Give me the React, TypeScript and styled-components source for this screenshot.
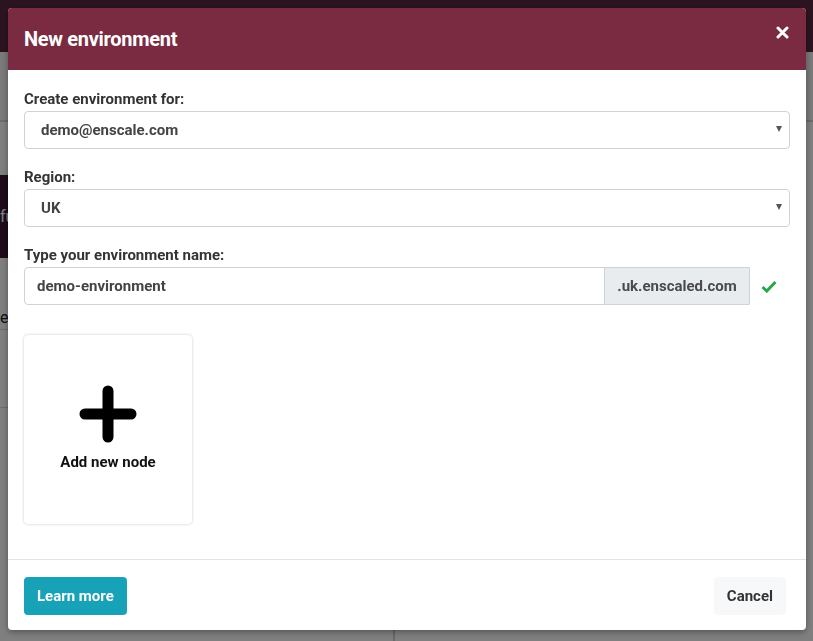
import React from "react";
import styled, { createGlobalStyle } from "styled-components";

const Global = createGlobalStyle`
  html, body { margin: 0; padding: 0; }
  body {
    width: 813px; height: 641px; overflow: hidden;
    font-family: "Roboto", "Liberation Sans", sans-serif;
    background: #fff;
  }
`;

const Page = styled.div`
  width: 813px;
  height: 641px;
  display: flex;
  flex-direction: column;
  background: #fefefe;
`;
const NavBar = styled.div`
  height: 52px;
  background: #57293f;
  flex-shrink: 0;
`;
const SubBar = styled.div`
  height: 68px;
  background: #f4f4f4;
  border-bottom: 2px solid #d6d6d6;
  flex-shrink: 0;
`;
const Content = styled.div`
  display: flex;
  flex-direction: column;
  padding-top: 53px;
  flex: 1;
`;
const HeroBlock = styled.div`
  height: 83px;
  width: 400px;
  background: #3c1530;
  color: #fff;
  font-size: 16px;
  display: flex;
  align-items: center;
`;
const Row = styled.div<{ $h: number }>`
  height: ${(p) => p.$h}px;
  width: 400px;
  border-bottom: 1px solid #d8d8d8;
  display: flex;
  align-items: flex-end;
  padding-bottom: 2px;
  box-sizing: border-box;
  font-size: 16px;
  color: #222;
`;
const BottomSplit = styled.div`
  flex: 1;
  display: flex;
`;
const SplitCol = styled.div`
  width: 393px;
  border-right: 2px solid #d0d0d0;
`;

const Overlay = styled.div`
  position: fixed;
  inset: 0;
  background: rgba(0, 0, 0, 0.5);
  padding: 8px;
  box-sizing: border-box;
`;

const Modal = styled.div`
  width: 798px;
  height: 622px;
  background: #fff;
  border-radius: 4px;
  overflow: hidden;
  display: flex;
  flex-direction: column;
  box-shadow: 0 2px 6px rgba(0, 0, 0, 0.35);
`;

const Header = styled.div`
  height: 62px;
  background: #7a2b42;
  display: flex;
  align-items: center;
  justify-content: space-between;
  padding: 0 16px;
  box-sizing: border-box;
  flex-shrink: 0;
`;
const Title = styled.h1`
  margin: 0;
  color: #fff;
  font-size: 20px;
  font-weight: 700;
  letter-spacing: -0.3px;
`;
const Close = styled.button`
  border: 0;
  background: none;
  padding: 0;
  width: 14px;
  height: 14px;
  margin-top: -14px;
  margin-right: 1px;
  display: flex;
  align-items: center;
  justify-content: center;
`;

const Body = styled.div`
  flex: 1;
  padding: 20px 16px 0 16px;
  display: flex;
  flex-direction: column;
  border-bottom: 1px solid #e3e3e3;
`;
const Field = styled.div`
  display: flex;
  flex-direction: column;
  margin-bottom: 19px;
`;
const Label = styled.label`
  font-size: 15px;
  font-weight: 700;
  color: #343434;
  margin-bottom: 3px;
  line-height: 18px;
`;
const Select = styled.div`
  height: 38px;
  border: 1px solid #cfd3d7;
  border-radius: 4px;
  box-sizing: border-box;
  display: flex;
  align-items: center;
  justify-content: space-between;
  padding: 0 7px 0 16px;
  font-size: 15px;
  font-weight: 700;
  color: #444;
`;
const Caret = styled.span`
  width: 0;
  height: 0;
  border-left: 3px solid transparent;
  border-right: 3px solid transparent;
  border-top: 6px solid #555;
  margin-top: -2px;
`;
const InputRow = styled.div`
  display: flex;
  align-items: center;
`;
const InputGroup = styled.div`
  display: flex;
  width: 726px;
  height: 38px;
  border: 1px solid #cfd3d7;
  border-radius: 4px 0 0 4px;
  box-sizing: border-box;
`;
const TextInput = styled.div`
  flex: 1;
  display: flex;
  align-items: center;
  padding-left: 12px;
  font-size: 15px;
  font-weight: 700;
  color: #444;
`;
const Addon = styled.div`
  width: 144px;
  background: #e9ecef;
  border-left: 1px solid #cfd3d7;
  display: flex;
  align-items: center;
  justify-content: center;
  font-size: 15px;
  font-weight: 700;
  color: #4a4a4a;
`;
const Check = styled.span`
  margin-left: 11px;
  display: flex;
`;

const Card = styled.div`
  margin-top: 11px;
  width: 168px;
  height: 189px;
  border-radius: 4px;
  box-shadow: 0 0 3px rgba(0, 0, 0, 0.22);
  display: flex;
  flex-direction: column;
  align-items: center;
  padding-top: 50px;
  box-sizing: border-box;
`;
const CardLabel = styled.div`
  margin-top: 10px;
  font-size: 15px;
  font-weight: 700;
  color: #111;
`;

const Footer = styled.div`
  height: 70px;
  display: flex;
  align-items: center;
  justify-content: space-between;
  padding: 0 20px 0 16px;
  flex-shrink: 0;
`;
const Button = styled.button<{ $primary?: boolean }>`
  height: 38px;
  border: 0;
  border-radius: 4px;
  padding: 0 13px;
  font-family: inherit;
  font-size: 15px;
  font-weight: 700;
  background: ${(p) => (p.$primary ? "#18a2b8" : "#f7f8f9")};
  color: ${(p) => (p.$primary ? "#fff" : "#333")};
  margin-top: 2px;
`;

export default function App() {
  return (
    <>
      <Global />
      <Page>
        <NavBar />
        <SubBar />
        <Content>
          <HeroBlock>fu</HeroBlock>
          <Row $h={72}>e</Row>
          <Row $h={78} />
          <BottomSplit>
            <SplitCol />
          </BottomSplit>
        </Content>
      </Page>
      <Overlay>
        <Modal>
          <Header>
            <Title>New environment</Title>
            <Close aria-label="Close">
              <svg width="13" height="13" viewBox="0 0 13 13">
                <path d="M2 2 L11 11 M11 2 L2 11" stroke="#fff" strokeWidth="3" strokeLinecap="round" />
              </svg>
            </Close>
          </Header>
          <Body>
            <Field>
              <Label>Create environment for:</Label>
              <Select>
                <span>demo@enscale.com</span>
                <Caret />
              </Select>
            </Field>
            <Field>
              <Label>Region:</Label>
              <Select>
                <span>UK</span>
                <Caret />
              </Select>
            </Field>
            <Field>
              <Label>Type your environment name:</Label>
              <InputRow>
                <InputGroup>
                  <TextInput>demo-environment</TextInput>
                  <Addon>.uk.enscaled.com</Addon>
                </InputGroup>
                <Check>
                  <svg width="16" height="13" viewBox="0 0 16 13">
                    <path d="M1.5 7 L5.8 11 L14.5 2" stroke="#28a745" strokeWidth="3" fill="none" />
                  </svg>
                </Check>
              </InputRow>
            </Field>
            <Card>
              <svg width="58" height="58" viewBox="0 0 58 58">
                <path d="M29 6 V52 M6 29 H52" stroke="#000" strokeWidth="11" strokeLinecap="round" />
              </svg>
              <CardLabel>Add new node</CardLabel>
            </Card>
          </Body>
          <Footer>
            <Button $primary>Learn more</Button>
            <Button>Cancel</Button>
          </Footer>
        </Modal>
      </Overlay>
    </>
  );
}
